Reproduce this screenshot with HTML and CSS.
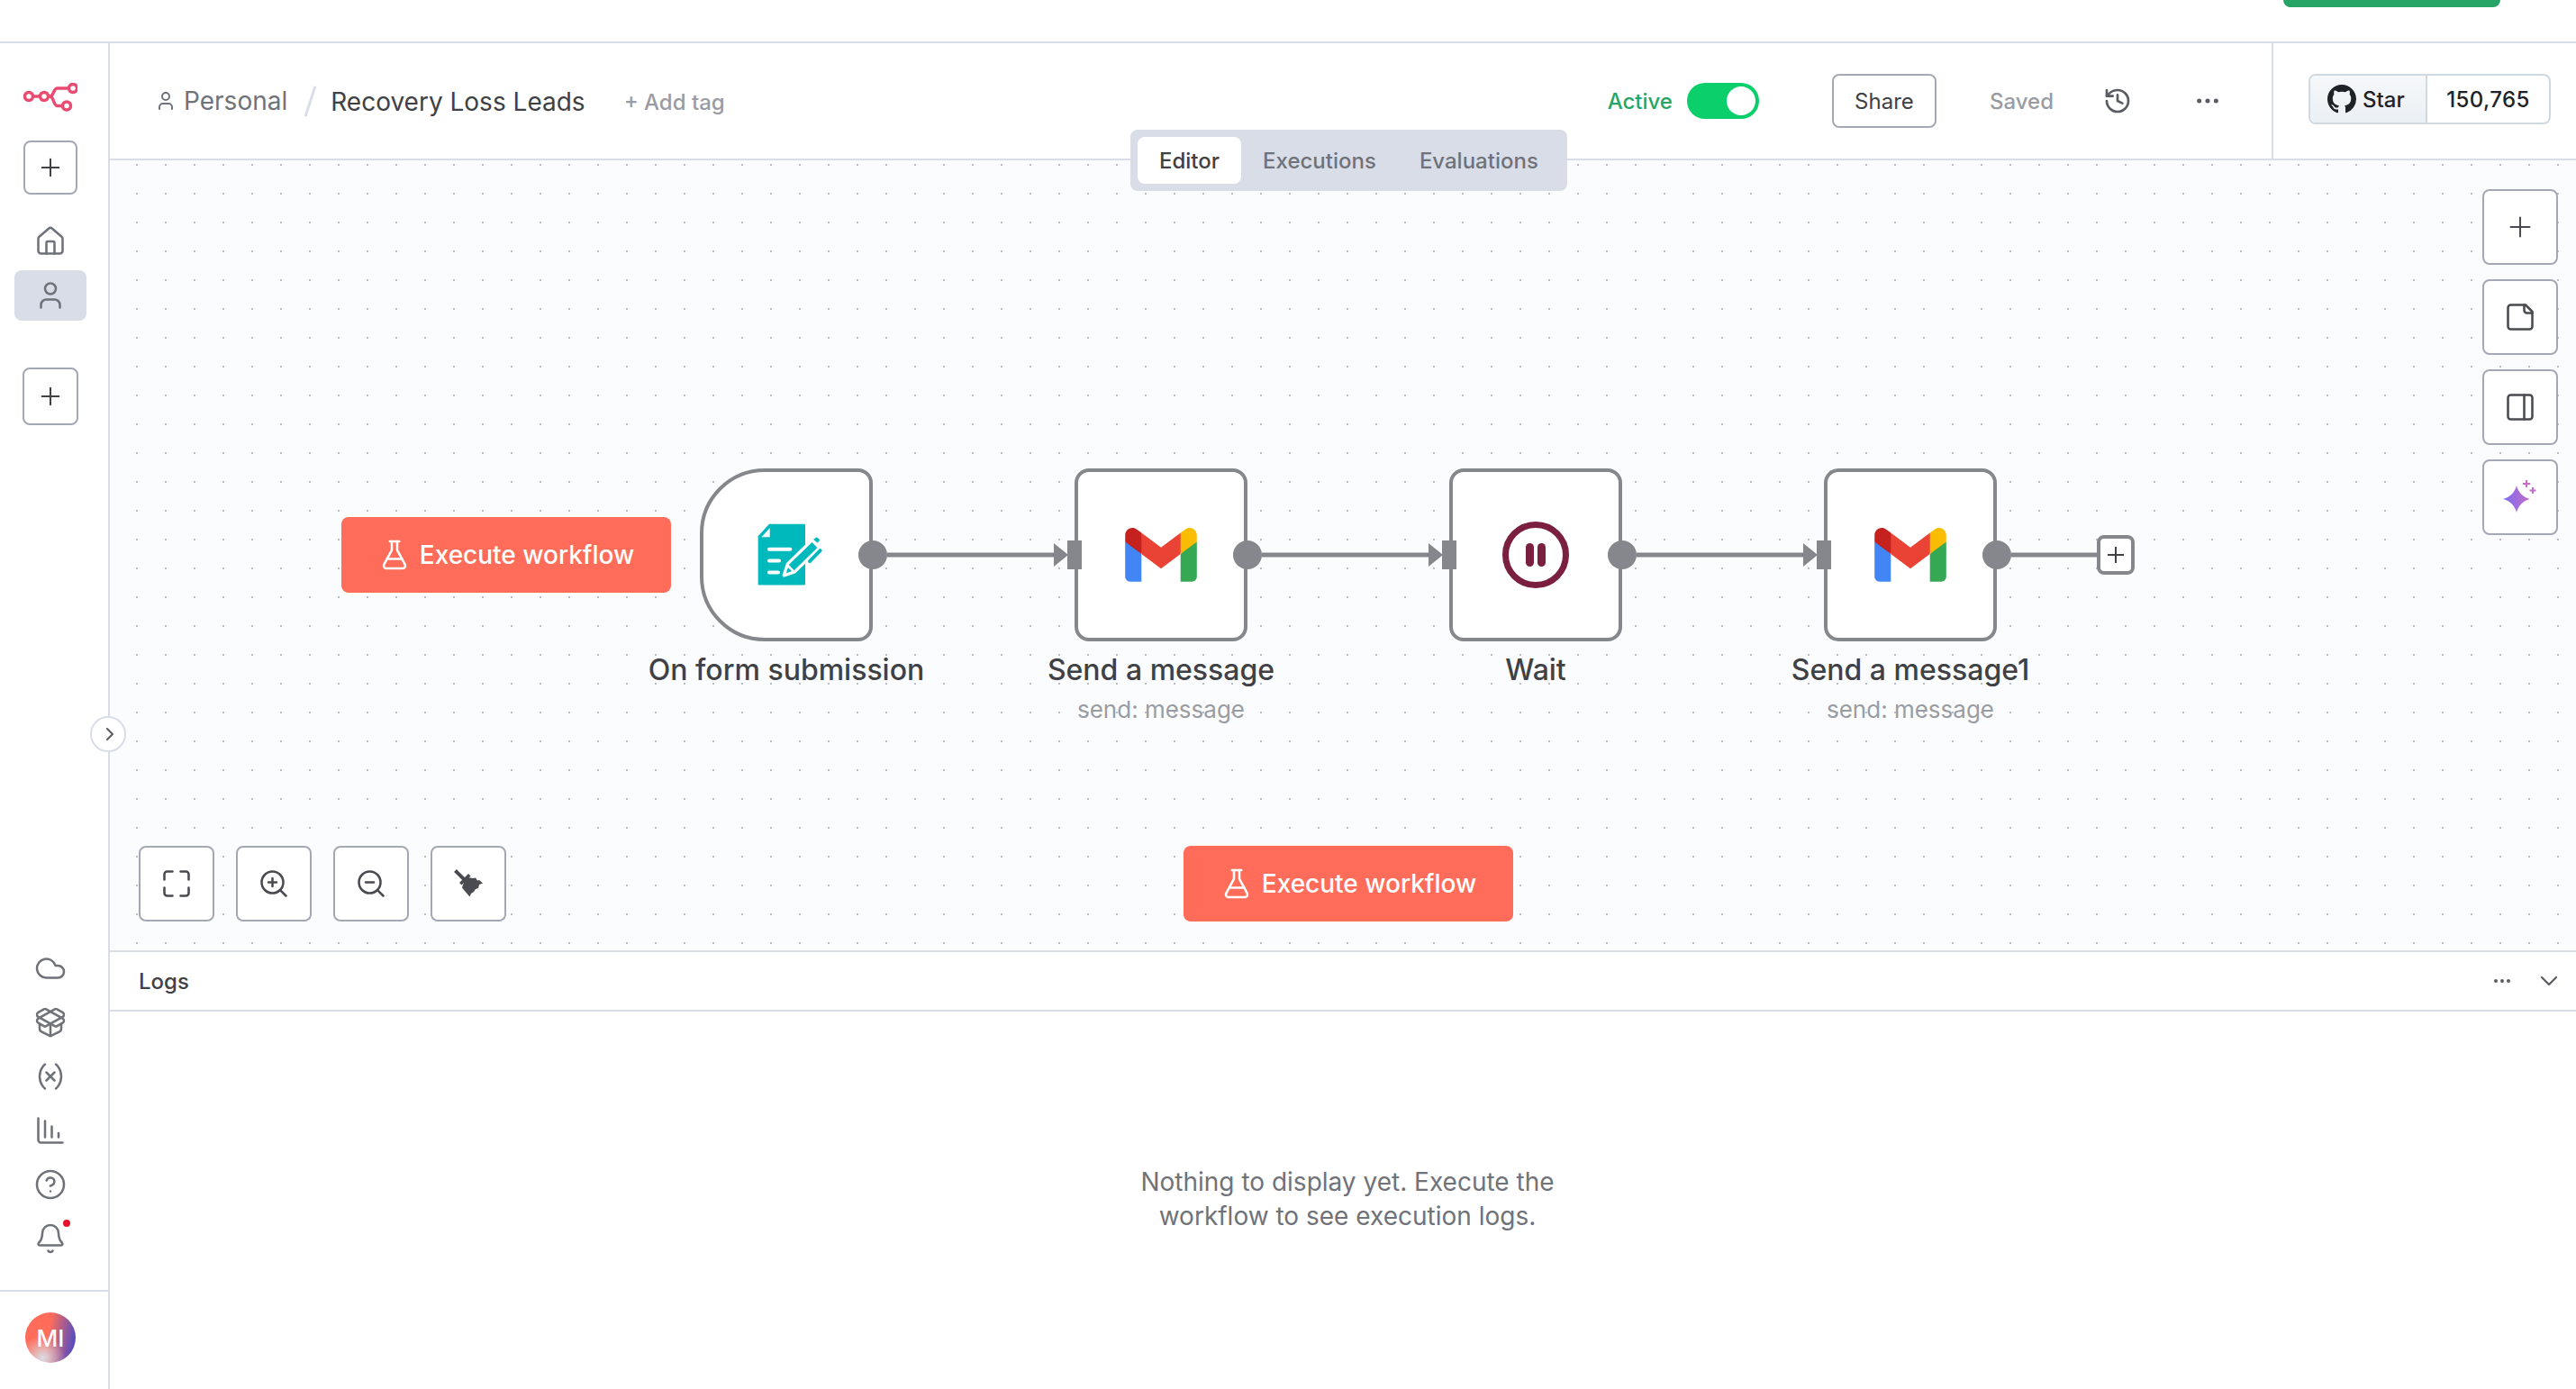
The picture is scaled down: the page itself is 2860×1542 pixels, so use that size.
FILE: index.html
```html
<!DOCTYPE html>
<html lang="en">
<head>
    <meta charset="UTF-8">
    <title>Recovery Loss Leads</title>
    <link rel="stylesheet" href="styles.css">
</head>
<body>

<!-- Strip above the app, the banner button is cut off by the window -->
<div class="top-strip"><div class="top-strip-button"></div></div>

<div class="shell">

    <!-- Left sidebar -->
    <aside class="sidebar">
        <svg class="logo" viewBox="0 0 60 32" fill="none" stroke="#ea4b71" stroke-width="3.5">
            <circle cx="6" cy="15" r="4.5"/>
            <circle cx="23" cy="15" r="4.5"/>
            <circle cx="48" cy="25.5" r="4.5"/>
            <circle cx="55" cy="6" r="4.5"/>
            <path d="M10.5 15h8M27.5 15h2c4 0 4-9 8-9h13M29.5 15c4 0 4 10.5 8 10.5h6"/>
        </svg>
        <button class="square-btn side-add">
            <svg class="icon plus-icon" viewBox="0 0 24 24"><path d="M5 12h14M12 5v14"/></svg>
        </button>
        <a class="side-item">
            <svg class="icon" viewBox="0 0 24 24"><path d="M15 21v-8a1 1 0 0 0-1-1h-4a1 1 0 0 0-1 1v8"/><path d="M3 10a2 2 0 0 1 .709-1.528l7-5.999a2 2 0 0 1 2.582 0l7 5.999A2 2 0 0 1 21 10v9a2 2 0 0 1-2 2H5a2 2 0 0 1-2-2z"/></svg>
        </a>
        <a class="side-item side-item-active">
            <svg class="icon" viewBox="0 0 24 24"><path d="M19 21v-2a4 4 0 0 0-4-4H9a4 4 0 0 0-4 4v2"/><circle cx="12" cy="7" r="4"/></svg>
        </a>
        <button class="square-btn side-add side-add-project">
            <svg class="icon plus-icon" viewBox="0 0 24 24"><path d="M5 12h14M12 5v14"/></svg>
        </button>

        <div class="side-bottom">
            <svg class="icon" viewBox="0 0 24 24"><path d="M17.5 19H9a7 7 0 1 1 6.71-9h1.79a4.5 4.5 0 1 1 0 9Z"/></svg>
            <svg class="icon" viewBox="0 0 24 24"><path d="M12 22v-9"/><path d="M15.17 2.21a1.67 1.67 0 0 1 1.63 0L21 4.57a1.93 1.93 0 0 1 0 3.36L8.82 14.79a1.655 1.655 0 0 1-1.64 0L3 12.43a1.93 1.93 0 0 1 0-3.36z"/><path d="M20 13v3.87a2.06 2.06 0 0 1-1.11 1.83l-6 3.08a1.93 1.93 0 0 1-1.78 0l-6-3.08A2.06 2.06 0 0 1 4 16.87V13"/><path d="M21 12.43a1.93 1.93 0 0 0 0-3.36L8.83 2.2a1.64 1.64 0 0 0-1.63 0L3 4.57a1.93 1.93 0 0 0 0 3.36l12.18 6.86a1.636 1.636 0 0 0 1.63 0z"/></svg>
            <svg class="icon" viewBox="0 0 24 24"><path d="M8 21s-4-3-4-9 4-9 4-9"/><path d="M16 3s4 3 4 9-4 9-4 9"/><path d="M15 9l-6 6M9 9l6 6"/></svg>
            <svg class="icon" viewBox="0 0 24 24"><path d="M13 17V9M18 17v-3M8 17V5"/><path d="M3 3v16a2 2 0 0 0 2 2h16"/></svg>
            <svg class="icon" viewBox="0 0 24 24"><circle cx="12" cy="12" r="10"/><path d="M9.09 9a3 3 0 0 1 5.83 1c0 2-3 3-3 3M12 17h.01"/></svg>
            <div class="bell">
                <svg class="icon" viewBox="0 0 24 24"><path d="M10.268 21a2 2 0 0 0 3.464 0"/><path d="M3.262 15.326A1 1 0 0 0 4 17h16a1 1 0 0 0 .74-1.673C19.41 13.956 18 12.499 18 8A6 6 0 0 0 6 8c0 4.499-1.411 5.956-2.738 7.326"/></svg>
                <span class="bell-dot"></span>
            </div>
        </div>

        <div class="side-user">
            <div class="avatar">MI</div>
        </div>
    </aside>

    <button class="collapse-btn">
        <svg viewBox="0 0 24 24"><path d="m9 18 6-6-6-6"/></svg>
    </button>

    <main class="main">

        <!-- Workflow header -->
        <header class="wf-header">
            <div class="wf-left">
                <svg class="icon crumb-icon" viewBox="0 0 24 24"><path d="M19 21v-2a4 4 0 0 0-4-4H9a4 4 0 0 0-4 4v2"/><circle cx="12" cy="7" r="4"/></svg>
                <span class="crumb">Personal</span>
                <span class="crumb-slash"></span>
                <span class="wf-name">Recovery Loss Leads</span>
                <span class="add-tag">+ Add tag</span>

                <span class="active-label">Active</span>
                <span class="toggle"><span class="toggle-knob"></span></span>
                <button class="share-btn">Share</button>
                <span class="saved">Saved</span>
                <svg class="icon history-icon" viewBox="0 0 24 24"><path d="M3 12a9 9 0 1 0 9-9 9.75 9.75 0 0 0-6.74 2.74L3 8"/><path d="M3 3v5h5"/><path d="M12 7v5l4 2"/></svg>
                <svg class="more-icon" viewBox="0 0 24 24"><circle cx="5" cy="12" r="1.9"/><circle cx="12" cy="12" r="1.9"/><circle cx="19" cy="12" r="1.9"/></svg>
            </div>
            <div class="wf-right">
                <div class="gh-star">
                    <span class="gh-star-btn">
                        <svg class="gh-mark" viewBox="0 0 16 16"><path d="M8 0C3.58 0 0 3.58 0 8c0 3.54 2.29 6.53 5.47 7.59.4.07.55-.17.55-.38 0-.19-.01-.82-.01-1.49-2.01.37-2.53-.49-2.69-.94-.09-.23-.48-.94-.82-1.13-.28-.15-.68-.52-.01-.53.63-.01 1.08.58 1.23.82.72 1.21 1.87.87 2.33.66.07-.52.28-.87.51-1.07-1.78-.2-3.64-.89-3.64-3.95 0-.87.31-1.59.82-2.15-.08-.2-.36-1.02.08-2.12 0 0 .67-.21 2.2.82.64-.18 1.32-.27 2-.27.68 0 1.36.09 2 .27 1.53-1.04 2.2-.82 2.2-.82.44 1.1.16 1.92.08 2.12.51.56.82 1.27.82 2.15 0 3.07-1.87 3.75-3.65 3.95.29.25.54.73.54 1.48 0 1.07-.01 1.93-.01 2.2 0 .21.15.46.55.38A8.013 8.013 0 0016 8c0-4.42-3.58-8-8-8z"/></svg>
                        Star
                    </span>
                    <span class="gh-count">150,765</span>
                </div>
            </div>
        </header>

        <!-- Editor / Executions / Evaluations -->
        <nav class="tabs">
            <span class="tab tab-active">Editor</span>
            <span class="tab">Executions</span>
            <span class="tab">Evaluations</span>
        </nav>

        <!-- Canvas -->
        <section class="canvas">
            <svg class="dots" width="100%" height="100%">
                <defs>
                    <pattern id="dotGrid" x="29" y="4" width="32" height="32" patternUnits="userSpaceOnUse">
                        <rect width="2" height="2" fill="#b9bcc6"/>
                    </pattern>
                </defs>
                <rect width="100%" height="100%" fill="url(#dotGrid)"/>
            </svg>

            <button class="exec-btn exec-btn-node">
                <svg class="icon" viewBox="0 0 24 24"><path d="M14 2v6a2 2 0 0 0 .245.96l5.51 10.08A2 2 0 0 1 18 22H6a2 2 0 0 1-1.755-2.96l5.51-10.08A2 2 0 0 0 10 8V2"/><path d="M6.453 15h11.094"/><path d="M8.5 2h7"/></svg>
                Execute workflow
            </button>

            <div class="node node-form">
                <div class="node-box node-box-trigger">
                    <svg class="form-icon" viewBox="240 90 225 215">
                        <path d="M282 95h116a4 4 0 0 1 4 4v195a4 4 0 0 1-4 4H249a4 4 0 0 1-4-4V135z" fill="#00b9bd"/>
                        <path d="M256 138l28-30v30z" fill="#fff"/>
                        <path d="M282 179h70M282 217h33M282 256h30" stroke="#fff" stroke-width="12" stroke-linecap="round"/>
                        <path d="M343 228l82-80 24 26-82 80-36 12z" fill="#00b9bd" stroke="#fff" stroke-width="10" stroke-linejoin="round"/>
                        <path d="M343 232l22 22" stroke="#fff" stroke-width="8"/>
                        <path d="M429 146l12-8 10 10-8 10z" fill="#00b9bd"/>
                        <path d="M417 219l35-36" stroke="#00b9bd" stroke-width="12" stroke-linecap="round"/>
                    </svg>
                </div>
                <div class="node-title">On form submission</div>
            </div>

            <div class="node node-send">
                <div class="node-box">
                    <svg class="gmail-icon" viewBox="0 0 256 193">
                        <path fill="#4285F4" d="M58.182 192.05V93.14L27.507 65.077 0 49.504v125.091c0 9.658 7.825 17.455 17.455 17.455h40.727Z"/>
                        <path fill="#34A853" d="M197.818 192.05h40.727c9.659 0 17.455-7.826 17.455-17.455V49.505l-31.156 17.837-27.026 25.798v98.91Z"/>
                        <path fill="#EA4335" d="m58.182 93.14-4.174-38.647 4.174-36.989L128 69.868l69.818-52.364 4.669 34.992-4.669 40.644L128 145.504z"/>
                        <path fill="#FBBC04" d="M197.818 17.504V93.14L256 49.504V26.231c0-21.585-24.64-33.89-41.89-20.945l-16.292 12.218Z"/>
                        <path fill="#C5221F" d="m0 49.504 26.759 20.07L58.182 93.14V17.504L41.89 5.286C24.61-7.66 0 4.646 0 26.23v23.273Z"/>
                    </svg>
                </div>
                <div class="node-title">Send a message</div>
                <div class="node-sub">send: message</div>
            </div>

            <div class="node node-wait">
                <div class="node-box">
                    <svg class="wait-icon" viewBox="0 0 74 74">
                        <circle cx="37" cy="37" r="33.5" fill="none" stroke="#7a1f3f" stroke-width="7"/>
                        <rect x="26" y="24" width="9" height="26" rx="4.5" fill="#7a1f3f"/>
                        <rect x="39" y="24" width="9" height="26" rx="4.5" fill="#7a1f3f"/>
                    </svg>
                </div>
                <div class="node-title">Wait</div>
            </div>

            <div class="node node-send2">
                <div class="node-box">
                    <svg class="gmail-icon" viewBox="0 0 256 193">
                        <path fill="#4285F4" d="M58.182 192.05V93.14L27.507 65.077 0 49.504v125.091c0 9.658 7.825 17.455 17.455 17.455h40.727Z"/>
                        <path fill="#34A853" d="M197.818 192.05h40.727c9.659 0 17.455-7.826 17.455-17.455V49.505l-31.156 17.837-27.026 25.798v98.91Z"/>
                        <path fill="#EA4335" d="m58.182 93.14-4.174-38.647 4.174-36.989L128 69.868l69.818-52.364 4.669 34.992-4.669 40.644L128 145.504z"/>
                        <path fill="#FBBC04" d="M197.818 17.504V93.14L256 49.504V26.231c0-21.585-24.64-33.89-41.89-20.945l-16.292 12.218Z"/>
                        <path fill="#C5221F" d="m0 49.504 26.759 20.07L58.182 93.14V17.504L41.89 5.286C24.61-7.66 0 4.646 0 26.23v23.273Z"/>
                    </svg>
                </div>
                <div class="node-title">Send a message1</div>
                <div class="node-sub">send: message</div>
            </div>

            <!-- Connections, drawn in page coordinates and shifted onto the canvas -->
            <svg class="edges" width="2738" height="877" viewBox="122 178 2738 877">
                <g fill="#85878c" stroke="none">
                    <rect x="985" y="613.5" width="190" height="5"/>
                    <rect x="1401" y="613.5" width="190" height="5"/>
                    <rect x="1817" y="613.5" width="190" height="5"/>
                    <rect x="2233" y="613.5" width="97" height="5"/>
                    <circle cx="969" cy="616" r="16"/>
                    <circle cx="1385" cy="616" r="16"/>
                    <circle cx="1801" cy="616" r="16"/>
                    <circle cx="2217" cy="616" r="16"/>
                    <path d="M1170 603l16 13-16 13z"/>
                    <path d="M1586 603l16 13-16 13z"/>
                    <path d="M2002 603l16 13-16 13z"/>
                    <rect x="1185" y="600" width="16" height="32"/>
                    <rect x="1601" y="600" width="16" height="32"/>
                    <rect x="2017" y="600" width="16" height="32"/>
                </g>
                <rect x="2330" y="596" width="38" height="40" rx="6" fill="#fff" stroke="#85878c" stroke-width="4"/>
                <path d="M2349 607v18M2340 616h18" stroke="#404145" stroke-width="2" fill="none"/>
            </svg>

            <div class="side-tools">
                <button class="square-btn tool-btn"><svg class="icon thin-icon" viewBox="0 0 24 24"><path d="M5 12h14M12 5v14"/></svg></button>
                <button class="square-btn tool-btn"><svg class="icon" viewBox="0 0 24 24"><path d="M16 3H5a2 2 0 0 0-2 2v14a2 2 0 0 0 2 2h14a2 2 0 0 0 2-2V8Z"/><path d="M15 3v4a2 2 0 0 0 2 2h4"/></svg></button>
                <button class="square-btn tool-btn"><svg class="icon" viewBox="0 0 24 24"><rect x="3" y="3" width="18" height="18" rx="2"/><path d="M15 3v18"/></svg></button>
                <button class="square-btn tool-btn">
                    <svg class="sparkle" viewBox="0 0 38 38">
                        <defs>
                            <linearGradient id="sparkleFill" x1="0" y1="0" x2="1" y2="0">
                                <stop offset="0" stop-color="#7c6df0"/>
                                <stop offset="1" stop-color="#c56cc8"/>
                            </linearGradient>
                        </defs>
                        <path d="M15 6c1.5 6.5 6.5 13 15 15-8.5 2-13.5 8.5-15 15-1.5-6.5-6.5-13-15-15 8.5-2 13.5-8.5 15-15z" fill="url(#sparkleFill)"/>
                        <path d="M26 0v8M22 4h8M33 8v7M29.5 11.5h7" stroke="#c56cc8" stroke-width="2" fill="none"/>
                    </svg>
                </button>
            </div>

            <div class="zoom-tools">
                <button class="square-btn tool-btn"><svg class="icon" viewBox="0 0 24 24"><path d="M3 9V5a2 2 0 0 1 2-2h4M15 3h4a2 2 0 0 1 2 2v4M21 15v4a2 2 0 0 1-2 2h-4M9 21H5a2 2 0 0 1-2-2v-4"/></svg></button>
                <button class="square-btn tool-btn"><svg class="icon" viewBox="0 0 24 24"><circle cx="11" cy="11" r="8"/><path d="m21 21-4.3-4.3M11 8v6M8 11h6"/></svg></button>
                <button class="square-btn tool-btn"><svg class="icon" viewBox="0 0 24 24"><circle cx="11" cy="11" r="8"/><path d="m21 21-4.3-4.3M8 11h6"/></svg></button>
                <button class="square-btn tool-btn">
                    <svg class="broom" viewBox="0 0 32 32">
                        <path d="M1.5 1.5l12 12" stroke="#4a4b50" stroke-width="4" fill="none"/>
                        <path d="M6 15L16 5l2.5 2.5-10 10z" fill="#4a4b50"/>
                        <path d="M13 8.5L21 10l3-.5 2 3 2-.5 4 3.5-4 1.5-1 4-3 1-2 3-3 2-1.5 3.5L9 20.5z" fill="#4a4b50"/>
                    </svg>
                </button>
            </div>

            <button class="exec-btn exec-btn-main">
                <svg class="icon" viewBox="0 0 24 24"><path d="M14 2v6a2 2 0 0 0 .245.96l5.51 10.08A2 2 0 0 1 18 22H6a2 2 0 0 1-1.755-2.96l5.51-10.08A2 2 0 0 0 10 8V2"/><path d="M6.453 15h11.094"/><path d="M8.5 2h7"/></svg>
                Execute workflow
            </button>
        </section>

        <!-- Logs panel -->
        <section class="logs">
            <div class="logs-header">
                <span class="logs-title">Logs</span>
                <svg class="logs-more" viewBox="0 0 24 24"><circle cx="5" cy="12" r="2"/><circle cx="12" cy="12" r="2"/><circle cx="19" cy="12" r="2"/></svg>
                <svg class="icon logs-chevron" viewBox="0 0 24 24"><path d="m6 9 6 6 6-6"/></svg>
            </div>
            <div class="logs-body">
                <p class="logs-empty">Nothing to display yet. Execute the<br>workflow to see execution logs.</p>
            </div>
        </section>
    </main>
</div>

</body>
</html>
```

FILE: styles.css
```css
* {
    box-sizing: border-box;
}

html, body {
    margin: 0;
    height: 100%;
    overflow: hidden;
}

body {
    display: flex;
    flex-direction: column;
    font-family: "Inter", "Liberation Sans", sans-serif;
    color: #404145;
    background-color: #fff;
}

button {
    font-family: inherit;
    padding: 0;
    cursor: pointer;
}

.icon {
    width: 36px;
    height: 36px;
    flex: none;
    fill: none;
    stroke: #707279;
    stroke-width: 1.7;
    stroke-linecap: round;
    stroke-linejoin: round;
}

/* Strip above the app */
.top-strip {
    flex: none;
    height: 48px;
    display: flex;
    justify-content: flex-end;
    padding-right: 84px;
    border-bottom: 2px solid #d9dde8;
}

.top-strip-button {
    width: 241px;
    height: 8px;
    background-color: #27a567;
    border-radius: 0 0 8px 8px;
}

.shell {
    flex: 1;
    display: flex;
    min-height: 0;
    position: relative;
}

/* Sidebar */
.sidebar {
    flex: none;
    width: 122px;
    display: flex;
    flex-direction: column;
    align-items: center;
    padding-top: 44px;
    padding-right: 8px;
    border-right: 2px solid #d9dde8;
}

.logo {
    width: 60px;
    height: 32px;
    flex: none;
}

.square-btn {
    display: flex;
    align-items: center;
    justify-content: center;
    background-color: #fff;
    border: 2px solid #a3a8b4;
    border-radius: 8px;
}

.side-add {
    width: 60px;
    height: 60px;
    margin-top: 32px;
    margin-bottom: 24px;
}

.plus-icon {
    width: 32px;
    height: 32px;
    stroke: #404145;
    stroke-width: 1.5;
}

.side-add-project {
    width: 62px;
    height: 64px;
    margin-top: 48px;
    margin-bottom: 0;
}

.side-item {
    width: 80px;
    height: 56px;
    display: flex;
    align-items: center;
    justify-content: center;
    border-radius: 8px;
    margin-bottom: 4px;
}

.side-item-active {
    background-color: #d9dde8;
}

.side-bottom {
    margin-top: auto;
    display: flex;
    flex-direction: column;
    align-items: center;
    gap: 24px;
    padding-bottom: 39px;
}

.bell {
    position: relative;
    height: 36px;
}

.bell-dot {
    position: absolute;
    top: -3px;
    right: -4px;
    width: 8px;
    height: 8px;
    border-radius: 50%;
    background-color: #e8112d;
}

.side-user {
    align-self: stretch;
    height: 110px;
    margin-right: -8px;
    padding-top: 23px;
    padding-right: 8px;
    display: flex;
    justify-content: center;
    border-top: 2px solid #d9dde8;
}

.avatar {
    width: 56px;
    height: 56px;
    display: flex;
    align-items: center;
    justify-content: center;
    border-radius: 50%;
    color: #fff;
    font-size: 26px;
    font-weight: 500;
    background:
        radial-gradient(circle at 35% 90%, #d9dde8 0, rgba(217, 221, 232, 0) 40%),
        linear-gradient(100deg, #ff6d5a 45%, #5b4dbd 90%);
}

.collapse-btn {
    position: absolute;
    left: 100px;
    top: 747px;
    width: 40px;
    height: 40px;
    display: flex;
    align-items: center;
    justify-content: center;
    padding-left: 4px;
    background-color: #fff;
    border: 2px solid #d9dde8;
    border-radius: 50%;
    z-index: 5;
}

.collapse-btn svg {
    width: 24px;
    height: 24px;
    fill: none;
    stroke: #5a5c63;
    stroke-width: 2;
    stroke-linecap: round;
    stroke-linejoin: round;
}

/* Main column */
.main {
    flex: 1;
    min-width: 0;
    display: flex;
    flex-direction: column;
    position: relative;
}

.wf-header {
    flex: none;
    height: 130px;
    display: flex;
    border-bottom: 2px solid #d9dde8;
}

.wf-left {
    flex: 1;
    display: flex;
    align-items: center;
    padding-left: 50px;
    padding-right: 55px;
}

.crumb-icon {
    width: 24px;
    height: 24px;
    stroke-width: 2;
}

.crumb {
    margin-left: 8px;
    font-size: 28px;
    color: #707279;
}

.crumb-slash {
    width: 3px;
    height: 35px;
    margin: 0 21px 0 24px;
    background-color: #d9dde8;
    transform: rotate(18deg);
}

.wf-name {
    margin-top: 2px;
    font-size: 28px;
    color: #404145;
}

.add-tag {
    margin-left: 43px;
    margin-top: 2px;
    font-size: 24px;
    font-weight: 500;
    color: #9a9ca3;
}

.active-label {
    margin-left: auto;
    font-size: 24px;
    font-weight: 500;
    color: #27a567;
}

.toggle {
    margin-left: 16px;
    width: 80px;
    height: 40px;
    padding: 4px;
    display: flex;
    justify-content: flex-end;
    border-radius: 20px;
    background-color: #0acf6a;
}

.toggle-knob {
    width: 32px;
    height: 32px;
    border-radius: 50%;
    background-color: #fff;
}

.share-btn {
    margin-left: 81px;
    width: 116px;
    height: 60px;
    font-size: 24px;
    font-weight: 400;
    color: #404145;
    background-color: #fff;
    border: 2px solid #a3a8b4;
    border-radius: 8px;
}

.saved {
    margin-left: 59px;
    font-size: 24px;
    font-weight: 500;
    color: #9a9ca3;
}

.history-icon {
    width: 32px;
    height: 32px;
    margin-left: 55px;
    stroke-width: 2;
    stroke: #5a5c63;
}

.more-icon {
    width: 32px;
    height: 32px;
    margin-left: 68px;
    fill: #5a5c63;
}

.wf-right {
    flex: none;
    width: 338px;
    display: flex;
    align-items: flex-start;
    padding: 34px 0 0 39px;
    border-left: 2px solid #d9dde8;
}

.gh-star {
    display: flex;
    height: 56px;
    width: 269px;
    font-size: 24px;
    font-weight: 500;
    color: #1f2328;
    border: 2px solid #d1d9e0;
    border-radius: 8px;
    overflow: hidden;
}

.gh-star-btn {
    width: 130px;
    display: flex;
    align-items: center;
    gap: 7px;
    padding-left: 19px;
    background: linear-gradient(#f6f8fa, #ebf0f4);
    border-right: 2px solid #d1d9e0;
}

.gh-mark {
    width: 32px;
    height: 32px;
    fill: #1f2328;
}

.gh-count {
    flex: 1;
    display: flex;
    align-items: center;
    justify-content: center;
    letter-spacing: 0.4px;
}

/* Tabs hanging over the header line */
.tabs {
    position: absolute;
    left: 1133px;
    top: 96px;
    width: 485px;
    height: 68px;
    display: flex;
    align-items: center;
    padding: 0 8px;
    background-color: #d9dde8;
    border-radius: 8px;
    z-index: 3;
    font-size: 24px;
    font-weight: 500;
    color: #707279;
}

.tab {
    padding: 0 24px;
    height: 52px;
    display: flex;
    align-items: center;
    border-radius: 8px;
}

.tab-active {
    background-color: #fff;
    color: #404145;
}

/* Canvas */
.canvas {
    flex: none;
    height: 877px;
    position: relative;
    background-color: #fbfcfe;
    overflow: hidden;
}

.dots {
    position: absolute;
    left: 0;
    top: 0;
}

.exec-btn {
    position: absolute;
    display: flex;
    align-items: center;
    justify-content: center;
    gap: 10px;
    width: 366px;
    height: 84px;
    font-size: 28px;
    font-weight: 500;
    color: #fff;
    background-color: #ff6d5a;
    border: none;
    border-radius: 8px;
}

.exec-btn .icon {
    stroke: #fff;
}

.exec-btn-node {
    left: 257px;
    top: 396px;
}

.exec-btn-main {
    left: 1192px;
    bottom: 32px;
}

/* Workflow nodes */
.node {
    position: absolute;
    top: 342px;
    width: 400px;
    display: flex;
    flex-direction: column;
    align-items: center;
}

.node-form { left: 551px; }
.node-send { left: 967px; }
.node-wait { left: 1383px; }
.node-send2 { left: 1799px; }

.node-box {
    width: 192px;
    height: 192px;
    display: flex;
    align-items: center;
    justify-content: center;
    background-color: #fff;
    border: 4px solid #85878c;
    border-radius: 16px;
}

.node-box-trigger {
    border-radius: 72px 16px 16px 72px;
}

.form-icon {
    width: 75px;
    height: 72px;
    margin-left: 8px;
}

.gmail-icon {
    width: 80px;
    height: 60px;
}

.wait-icon {
    width: 74px;
    height: 74px;
}

.node-title {
    margin-top: 10px;
    font-size: 32px;
    font-weight: 500;
    line-height: 44px;
    color: #404145;
}

.node-sub {
    margin-top: 4px;
    font-size: 26px;
    line-height: 36px;
    color: #9a9ca3;
}

.edges {
    position: absolute;
    left: 0;
    top: 0;
}

.tool-btn {
    width: 84px;
    height: 84px;
}

.tool-btn .icon {
    stroke: #4a4b50;
}

.tool-btn .thin-icon {
    stroke-width: 1.33;
}

.side-tools {
    position: absolute;
    top: 32px;
    right: 20px;
    display: flex;
    flex-direction: column;
    gap: 16px;
}

.sparkle {
    width: 38px;
    height: 38px;
}

.zoom-tools {
    position: absolute;
    left: 32px;
    bottom: 32px;
    display: flex;
    gap: 24px;
}

.broom {
    width: 32px;
    height: 32px;
}

/* Logs */
.logs {
    flex: 1;
    display: flex;
    flex-direction: column;
    background-color: #fff;
    border-top: 2px solid #d9dde8;
}

.logs-header {
    flex: none;
    height: 66px;
    display: flex;
    align-items: center;
    padding: 0 14px 0 32px;
    border-bottom: 2px solid #d9dde8;
}

.logs-title {
    font-size: 24px;
    font-weight: 500;
}

.logs-more {
    margin-left: auto;
    width: 24px;
    height: 24px;
    fill: #5a5c63;
}

.logs-chevron {
    margin-left: 24px;
    width: 32px;
    height: 32px;
    stroke: #5a5c63;
}

.logs-body {
    flex: 1;
    display: flex;
    justify-content: center;
    padding-top: 170px;
    padding-left: 10px;
}

.logs-empty {
    margin: 0;
    font-size: 28px;
    line-height: 38px;
    text-align: center;
    color: #707279;
}
```
